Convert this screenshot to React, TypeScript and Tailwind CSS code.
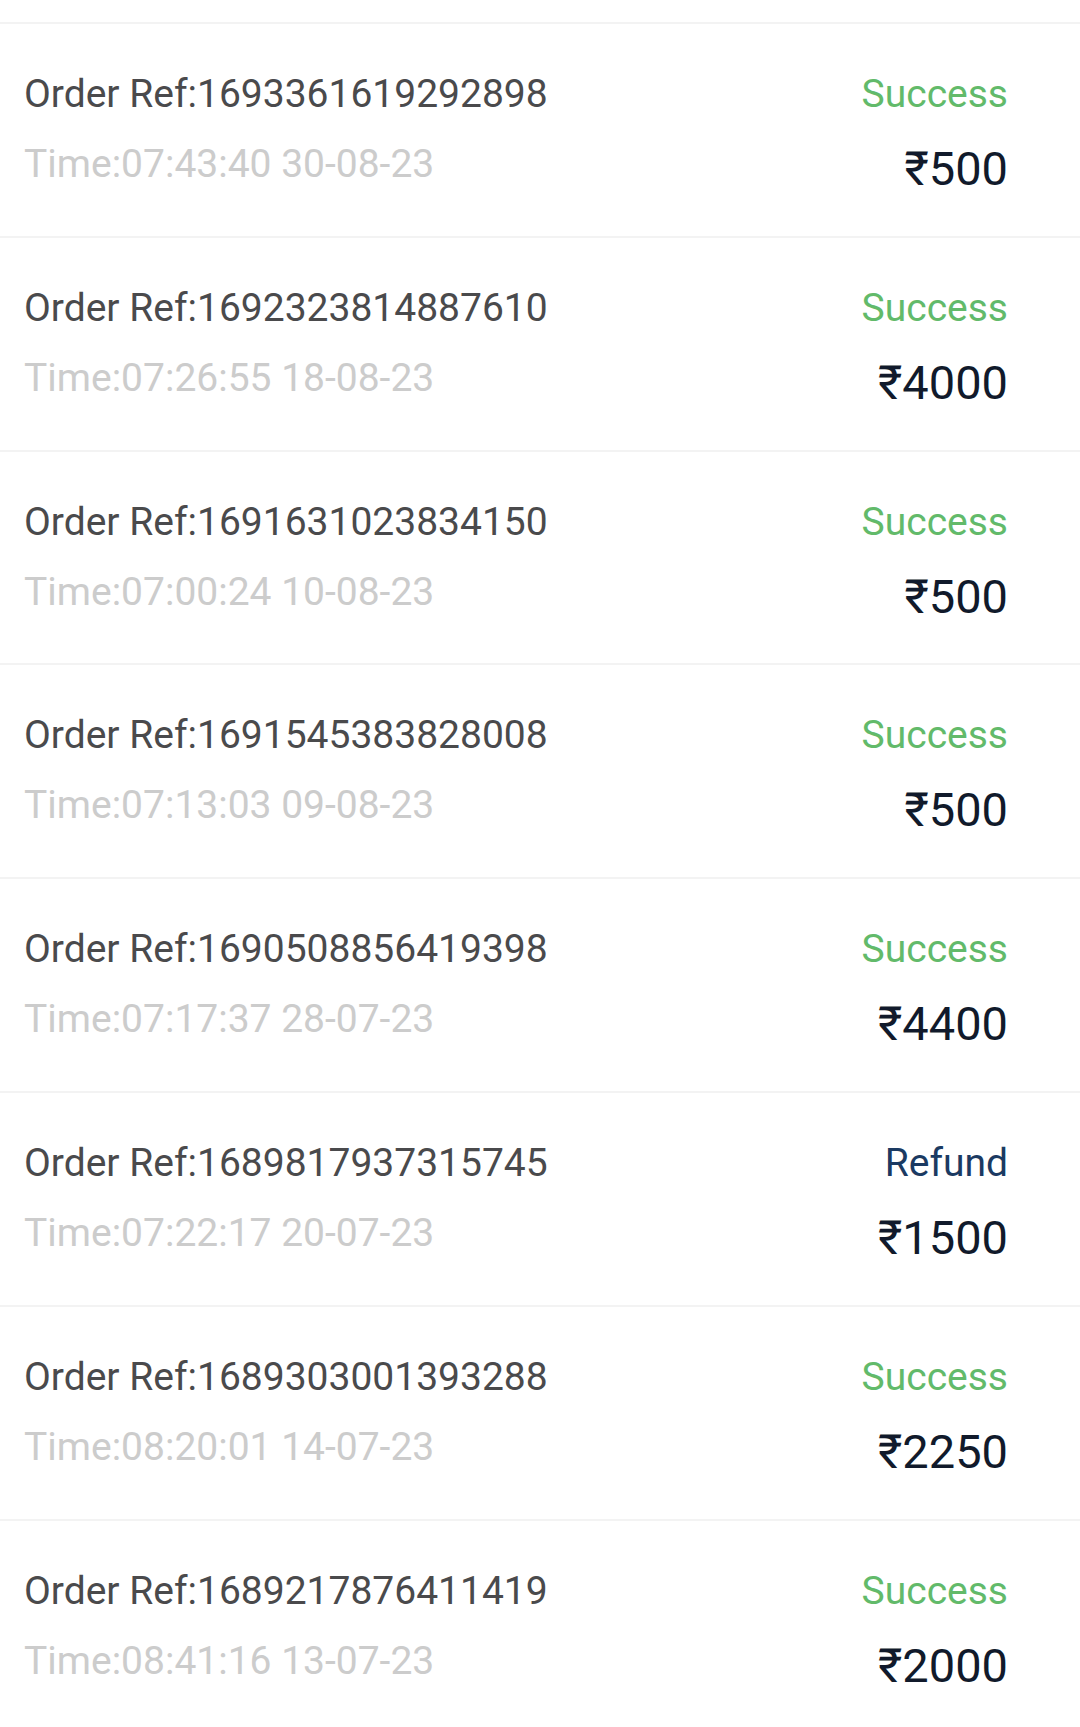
type Order = {
  ref: string;
  time: string;
  status: "Success" | "Refund";
  amount: string;
};

const orders: Order[] = [
  { ref: "1693361619292898", time: "07:43:40 30-08-23", status: "Success", amount: "500" },
  { ref: "1692323814887610", time: "07:26:55 18-08-23", status: "Success", amount: "4000" },
  { ref: "1691631023834150", time: "07:00:24 10-08-23", status: "Success", amount: "500" },
  { ref: "1691545383828008", time: "07:13:03 09-08-23", status: "Success", amount: "500" },
  { ref: "1690508856419398", time: "07:17:37 28-07-23", status: "Success", amount: "4400" },
  { ref: "1689817937315745", time: "07:22:17 20-07-23", status: "Refund", amount: "1500" },
  { ref: "1689303001393288", time: "08:20:01 14-07-23", status: "Success", amount: "2250" },
  { ref: "1689217876411419", time: "08:41:16 13-07-23", status: "Success", amount: "2000" },
];

const OrderRow = ({ order }: { order: Order }) => {
  return (
    <div className="h-[213.8px] shrink-0 border-t-2 border-[#f3f3f3] pl-6 pr-[72px] pt-[35px] flex justify-between">
      <div className="flex flex-col text-[39px] leading-[70px]">
        <span className="text-[#4a4a4c]">Order Ref:{order.ref}</span>
        <span className="text-[#cccccc]">Time:{order.time}</span>
      </div>
      <div className="flex flex-col items-end">
        <span
          className={
            order.status === "Success"
              ? "text-[39px] leading-[70px] text-[#62ba6a]"
              : "text-[39px] leading-[70px] text-[#1b3a62]"
          }
        >
          {order.status}
        </span>
        <span className="mt-[10px] text-[47px] leading-[60px] text-[#111a2b]">
          ₹{order.amount}
        </span>
      </div>
    </div>
  );
};

export default function App() {
  return (
    <div
      className="w-[1080px] h-[1727px] overflow-hidden bg-white flex flex-col"
      style={{ fontFamily: "Roboto, 'Noto Sans', sans-serif" }}
    >
      <div className="h-[22px] shrink-0" />
      {orders.map((order) => (
        <OrderRow key={order.ref} order={order} />
      ))}
    </div>
  );
}
